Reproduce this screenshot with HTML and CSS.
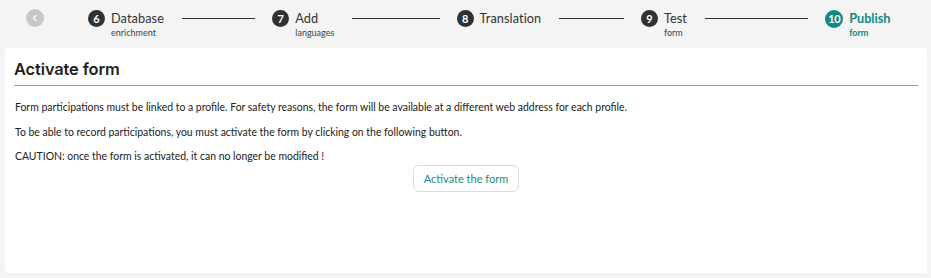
FILE: index.html
```html
<!DOCTYPE html>
<html>
<head>
<meta charset="utf-8">
<link rel="stylesheet" href="styles.css">
</head>
<body>
<div class="page">
  <div class="stepper">
    <div class="back"><svg width="18" height="18" viewBox="0 0 18 18"><circle cx="9" cy="9" r="9" fill="#c6c8c7"/><path d="M10 6.5 L7.5 9 L10 11.5" fill="none" stroke="#fff" stroke-width="1.2" stroke-linecap="round" stroke-linejoin="round"/></svg></div>
    <div class="steps">
      <div class="step">
        <span class="num">6</span>
        <div class="label"><div class="title">Database</div><div class="sub">enrichment</div></div>
        <span class="line"></span>
      </div>
      <div class="step">
        <span class="num">7</span>
        <div class="label"><div class="title">Add</div><div class="sub">languages</div></div>
        <span class="line"></span>
      </div>
      <div class="step">
        <span class="num">8</span>
        <div class="label"><div class="title">Translation</div><div class="sub">&nbsp;</div></div>
        <span class="line"></span>
      </div>
      <div class="step">
        <span class="num">9</span>
        <div class="label"><div class="title">Test</div><div class="sub">form</div></div>
        <span class="line"></span>
      </div>
      <div class="step active">
        <span class="num">10</span>
        <div class="label"><div class="title">Publish</div><div class="sub">form</div></div>
      </div>
    </div>
  </div>
  <div class="card">
    <h1 class="heading">Activate form</h1>
    <p class="text">Form participations must be linked to a profile. For safety reasons, the form will be available at a different web address for each profile.</p>
    <p class="text">To be able to record participations, you must activate the form by clicking on the following button.</p>
    <p class="text">CAUTION: once the form is activated, it can no longer be modified !</p>
    <div class="actions"><button class="btn">Activate the form</button></div>
  </div>
</div>
</body>
</html>
```
FILE: styles.css
```css
html, body {
  margin: 0;
  padding: 0;
  background: #f3f4f3;
}
body {
  font-family: Lato, "Noto Sans", sans-serif;
  color: #333;
  width: 931px;
  height: 278px;
  overflow: hidden;
}
.page {
  padding: 0 4px 5px 5px;
}
.stepper {
  display: flex;
  align-items: flex-start;
  height: 48px;
  box-sizing: border-box;
  padding-top: 9px;
}
.back {
  width: 18px;
  height: 18px;
  margin-left: 21px;
  margin-right: 44px;
}
.back svg { display: block; }
.steps {
  display: flex;
  flex: 1;
}
.step {
  display: flex;
  align-items: flex-start;
  width: 184.3px;
  flex: none;
}
.step.active { width: auto; }
.num {
  width: 17px;
  height: 17px;
  border-radius: 50%;
  background: #2f3132;
  color: #fff;
  font-size: 11px;
  font-weight: 700;
  display: flex;
  align-items: center;
  justify-content: center;
  flex: none;
  margin-top: 0.5px;
}
.active .num {
  background: #0f8a80;
  width: 18px;
  height: 18px;
  font-size: 11px;
  letter-spacing: -0.5px;
}
.label {
  margin-left: 6px;
}
.title {
  font-size: 12.7px;
  line-height: 18px;
  color: #333;
  letter-spacing: 0.1px;
}
.sub {
  font-size: 9px;
  line-height: 12px;
  margin-top: 0px;
  color: #444;
}
.active .title, .active .sub {
  color: #0f8a80;
  font-weight: 700;
}
.active .title { letter-spacing: 0; }
.line {
  flex: 1;
  height: 1px;
  background: #333;
  margin: 8.5px 17px 0 18px;
}
.card {
  background: #fff;
  border-radius: 4px;
  height: 225px;
  box-sizing: border-box;
  padding: 10px 9px 0 9px;
}
.heading {
  font-family: Inter, "Liberation Sans", sans-serif;
  font-size: 16.4px;
  font-weight: 600;
  color: #1f1f1f;
  margin: 0;
  line-height: 22px;
  padding-bottom: 5px;
  border-bottom: 1px solid #9a9a9a;
  letter-spacing: -0.1px;
}
.text {
  font-size: 10.45px;
  line-height: 13px;
  margin: 15px 0 0 1px;
  color: #222;
}
.text + .text { margin-top: 11.5px; }
.actions {
  display: flex;
  justify-content: center;
  margin-top: 2px;
}
.btn {
  font-family: Lato, "Noto Sans", sans-serif;
  font-size: 11px;
  color: #1b8a80;
  background: #fff;
  border: 1px solid #dcdcdc;
  border-radius: 6px;
  padding: 0 10px;
  height: 27px;
  cursor: pointer;
}
```
